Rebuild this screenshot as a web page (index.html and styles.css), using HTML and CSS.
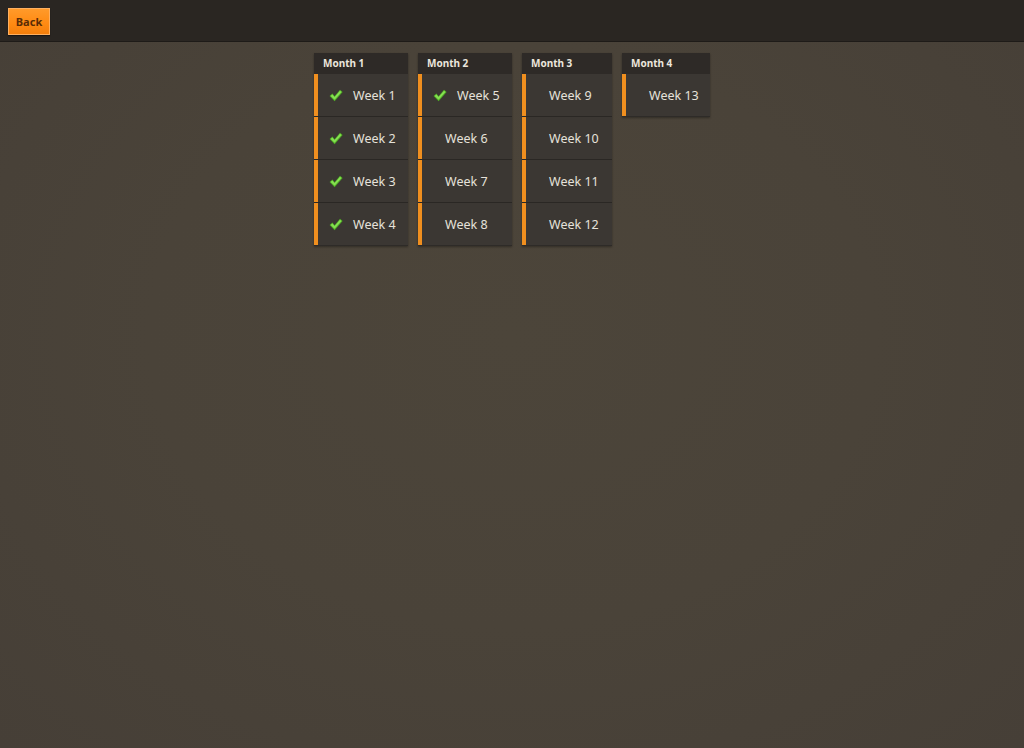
FILE: index.html
```html
<!DOCTYPE html>
<html>
<head>
<meta charset="utf-8">
<link rel="stylesheet" href="styles.css">
</head>
<body>
<header class="topbar">
  <button class="back">Back</button>
</header>
<main class="months">
  <section class="month wide">
    <div class="month-title">Month 1</div>
    <div class="week done"><svg class="check" viewBox="0 0 14 13"><path d="M0.6 7 L3.4 4.6 L5.6 7.2 L11 0.8 L13.6 3 L5.6 12.2 Z" fill="#4fae24"/><path d="M1.6 6.9 L3.4 5.5 L5.6 8.1 L11 1.7 L12.5 3 L5.6 10.8 Z" fill="#86df52"/></svg><span>Week 1</span></div>
    <div class="week done"><svg class="check" viewBox="0 0 14 13"><path d="M0.6 7 L3.4 4.6 L5.6 7.2 L11 0.8 L13.6 3 L5.6 12.2 Z" fill="#4fae24"/><path d="M1.6 6.9 L3.4 5.5 L5.6 8.1 L11 1.7 L12.5 3 L5.6 10.8 Z" fill="#86df52"/></svg><span>Week 2</span></div>
    <div class="week done"><svg class="check" viewBox="0 0 14 13"><path d="M0.6 7 L3.4 4.6 L5.6 7.2 L11 0.8 L13.6 3 L5.6 12.2 Z" fill="#4fae24"/><path d="M1.6 6.9 L3.4 5.5 L5.6 8.1 L11 1.7 L12.5 3 L5.6 10.8 Z" fill="#86df52"/></svg><span>Week 3</span></div>
    <div class="week done"><svg class="check" viewBox="0 0 14 13"><path d="M0.6 7 L3.4 4.6 L5.6 7.2 L11 0.8 L13.6 3 L5.6 12.2 Z" fill="#4fae24"/><path d="M1.6 6.9 L3.4 5.5 L5.6 8.1 L11 1.7 L12.5 3 L5.6 10.8 Z" fill="#86df52"/></svg><span>Week 4</span></div>
  </section>
  <section class="month wide">
    <div class="month-title">Month 2</div>
    <div class="week done"><svg class="check" viewBox="0 0 14 13"><path d="M0.6 7 L3.4 4.6 L5.6 7.2 L11 0.8 L13.6 3 L5.6 12.2 Z" fill="#4fae24"/><path d="M1.6 6.9 L3.4 5.5 L5.6 8.1 L11 1.7 L12.5 3 L5.6 10.8 Z" fill="#86df52"/></svg><span>Week 5</span></div>
    <div class="week"><span>Week 6</span></div>
    <div class="week"><span>Week 7</span></div>
    <div class="week"><span>Week 8</span></div>
  </section>
  <section class="month m3">
    <div class="month-title">Month 3</div>
    <div class="week"><span>Week 9</span></div>
    <div class="week"><span>Week 10</span></div>
    <div class="week"><span>Week 11</span></div>
    <div class="week"><span>Week 12</span></div>
  </section>
  <section class="month m4">
    <div class="month-title">Month 4</div>
    <div class="week"><span>Week 13</span></div>
  </section>
</main>
</body>
</html>
```
FILE: styles.css
```css
html, body {
  margin: 0;
  padding: 0;
  height: 100%;
}
body {
  font-family: "Noto Sans", "Open Sans", sans-serif;
  background: radial-gradient(ellipse at 50% 45%, #4c453a 0%, #4a4339 50%, #463f37 100%);
  color: #e6e2da;
  min-height: 748px;
}
.topbar {
  height: 42px;
  background: #2a2622;
  border-bottom: 1px solid #1e1b18;
  box-sizing: border-box;
  padding: 8px 0 0 8px;
  display: flex;
  align-items: flex-start;
}
.back {
  width: 42px;
  height: 27px;
  padding: 0;
  border: 1px solid #ffb060;
  background: linear-gradient(#ff9a2a, #ff8a12 60%, #f47f0c);
  color: #5a2c06;
  font-family: "Noto Sans", sans-serif;
  font-size: 11px;
  font-weight: 700;
  box-shadow: 0 1px 1px rgba(0,0,0,0.4);
}
.months {
  display: flex;
  justify-content: center;
  align-items: flex-start;
  gap: 10px;
  margin-top: 11px;
}
.month {
  width: 89px;
  background: #3b3733;
  box-shadow: 0 1px 2px rgba(0,0,0,0.35);
}
.month.wide {
  width: 94px;
}
.month.m3 {
  width: 90px;
}
.month.m4 {
  width: 88px;
}
.month-title {
  height: 21px;
  box-sizing: border-box;
  background: #2e2a27;
  font-size: 10px;
  font-weight: 700;
  line-height: 21px;
  padding-left: 9px;
  color: #ebe6dd;
}
.week {
  height: 43px;
  box-sizing: border-box;
  border-bottom: 1px solid #2a2724;
  box-shadow: inset 4px 0 0 #f08f1f;
  padding-left: 27px;
  display: flex;
  align-items: center;
  gap: 10px;
  font-size: 12.5px;
  color: #e6e2da;
}
.week.done {
  padding-left: 15px;
}
.week:last-child {
  border-bottom-color: #2e2b28;
}
.check {
  width: 14px;
  height: 13px;
  display: block;
}
```
